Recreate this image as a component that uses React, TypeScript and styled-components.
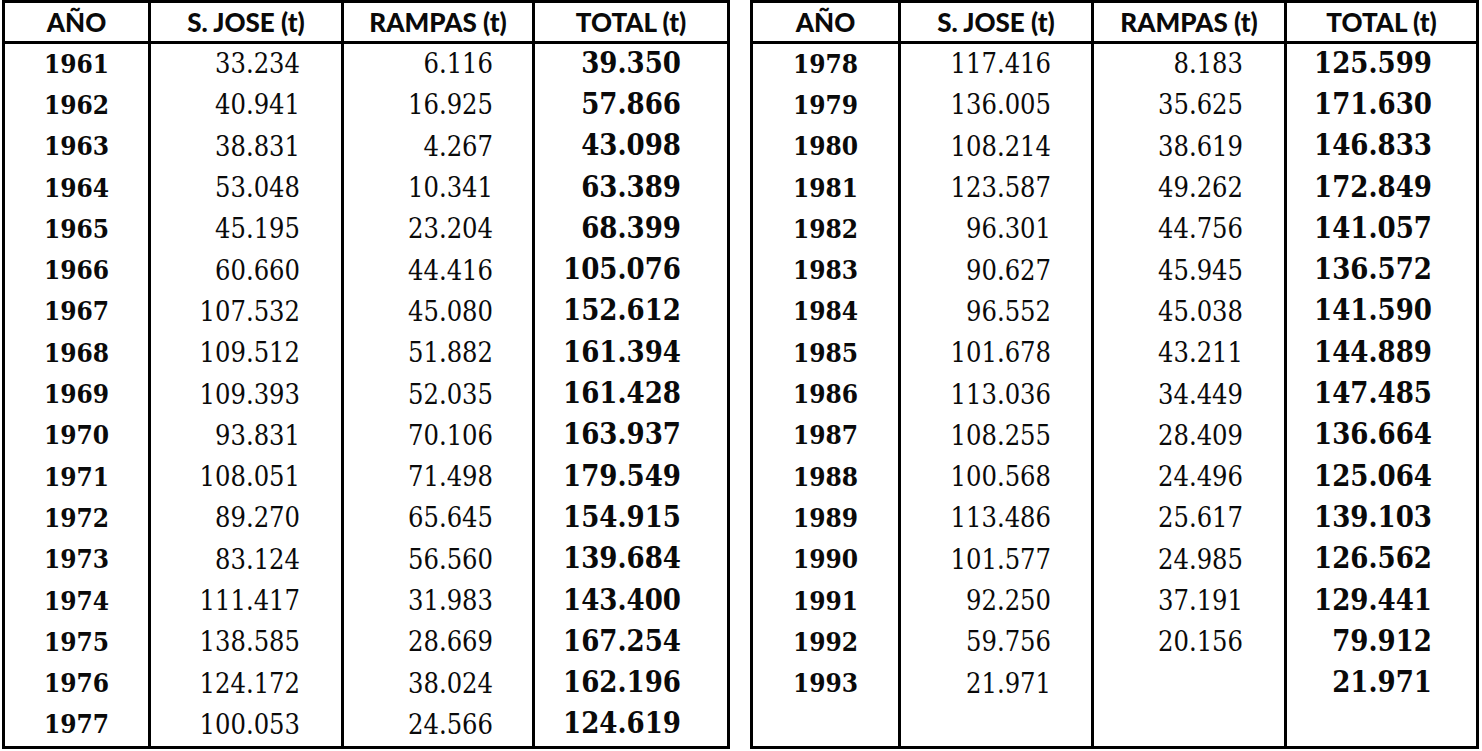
import styled, { createGlobalStyle } from "styled-components";

const GlobalStyle = createGlobalStyle`
  html, body {
    margin: 0;
    padding: 0;
    background: #ffffff;
  }
`;

type Row = [string, string, string, string];

const leftRows: Row[] = [
  ["1961", "33.234", "6.116", "39.350"],
  ["1962", "40.941", "16.925", "57.866"],
  ["1963", "38.831", "4.267", "43.098"],
  ["1964", "53.048", "10.341", "63.389"],
  ["1965", "45.195", "23.204", "68.399"],
  ["1966", "60.660", "44.416", "105.076"],
  ["1967", "107.532", "45.080", "152.612"],
  ["1968", "109.512", "51.882", "161.394"],
  ["1969", "109.393", "52.035", "161.428"],
  ["1970", "93.831", "70.106", "163.937"],
  ["1971", "108.051", "71.498", "179.549"],
  ["1972", "89.270", "65.645", "154.915"],
  ["1973", "83.124", "56.560", "139.684"],
  ["1974", "111.417", "31.983", "143.400"],
  ["1975", "138.585", "28.669", "167.254"],
  ["1976", "124.172", "38.024", "162.196"],
  ["1977", "100.053", "24.566", "124.619"],
];

const rightRows: Row[] = [
  ["1978", "117.416", "8.183", "125.599"],
  ["1979", "136.005", "35.625", "171.630"],
  ["1980", "108.214", "38.619", "146.833"],
  ["1981", "123.587", "49.262", "172.849"],
  ["1982", "96.301", "44.756", "141.057"],
  ["1983", "90.627", "45.945", "136.572"],
  ["1984", "96.552", "45.038", "141.590"],
  ["1985", "101.678", "43.211", "144.889"],
  ["1986", "113.036", "34.449", "147.485"],
  ["1987", "108.255", "28.409", "136.664"],
  ["1988", "100.568", "24.496", "125.064"],
  ["1989", "113.486", "25.617", "139.103"],
  ["1990", "101.577", "24.985", "126.562"],
  ["1991", "92.250", "37.191", "129.441"],
  ["1992", "59.756", "20.156", "79.912"],
  ["1993", "21.971", "", "21.971"],
  ["", "", "", ""],
];

const headers = ["AÑO", "S. JOSE (t)", "RAMPAS (t)", "TOTAL (t)"];

const Page = styled.div`
  display: flex;
  gap: 20px;
  padding-left: 2px;
`;

const Table = styled.div<{ $cols: string }>`
  display: grid;
  grid-template-columns: ${(p) => p.$cols};
  grid-template-rows: 41px;
  grid-auto-rows: 41.3px;
  border: 3px solid #000;
  color: #0a0a0a;
`;

const Cell = styled.div<{ $last?: boolean }>`
  box-sizing: border-box;
  display: flex;
  align-items: center;
  border-right: ${(p) => (p.$last ? "none" : "3px solid #000")};
  white-space: nowrap;
`;

const HeadCell = styled(Cell)`
  justify-content: center;
  border-bottom: 3px solid #000;
  font-family: Lato, "Liberation Sans", sans-serif;
  font-weight: 900;
  font-size: 26px;
`;

const serif = `"DejaVu Serif Condensed", "DejaVu Serif", serif`;

const YearCell = styled(Cell)`
  justify-content: center;
  padding-bottom: 2px;
  font-family: ${serif};
  font-stretch: condensed;
  font-weight: 700;
  font-size: 26px;
`;

const NumCell = styled(Cell)<{ $pad: number }>`
  justify-content: flex-end;
  padding-right: ${(p) => p.$pad}px;
  padding-bottom: 2px;
  font-family: ${serif};
  font-stretch: condensed;
  font-size: 27px;
`;

const TotalCell = styled(Cell)<{ $pad: number }>`
  justify-content: flex-end;
  padding-right: ${(p) => p.$pad}px;
  padding-bottom: 4px;
  font-family: ${serif};
  font-stretch: condensed;
  font-weight: 700;
  font-size: 29px;
`;

type DataTableProps = {
  rows: Row[];
  cols: string;
  pads: [number, number, number];
};

const DataTable = ({ rows, cols, pads }: DataTableProps) => (
  <Table $cols={cols}>
    {headers.map((h, i) => (
      <HeadCell key={h} $last={i === 3}>
        {h}
      </HeadCell>
    ))}
    {rows.map((r, i) => [
      <YearCell key={`y${i}`}>{r[0]}</YearCell>,
      <NumCell key={`s${i}`} $pad={pads[0]}>
        {r[1]}
      </NumCell>,
      <NumCell key={`r${i}`} $pad={pads[1]}>
        {r[2]}
      </NumCell>,
      <TotalCell key={`t${i}`} $pad={pads[2]} $last>
        {r[3]}
      </TotalCell>,
    ])}
  </Table>
);

export default function App() {
  return (
    <>
      <GlobalStyle />
      <Page>
        <DataTable rows={leftRows} cols="146px 193px 191px 192px" pads={[41, 39, 46]} />
        <DataTable rows={rightRows} cols="148px 193px 193px 189px" pads={[40, 41, 44]} />
      </Page>
    </>
  );
}
